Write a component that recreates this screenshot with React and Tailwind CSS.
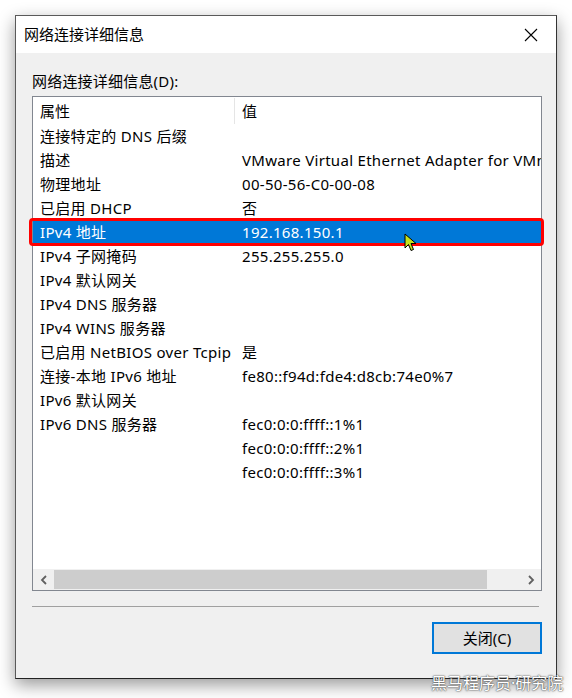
import React from 'react';

const FONT = { fontFamily: '"Noto Sans", "Noto Sans CJK SC", sans-serif' };

const rows = [
  ['连接特定的 DNS 后缀', ''],
  ['描述', 'VMware Virtual Ethernet Adapter for VMnet8'],
  ['物理地址', '00-50-56-C0-00-08'],
  ['已启用 DHCP', '否'],
  ['IPv4 地址', '192.168.150.1'],
  ['IPv4 子网掩码', '255.255.255.0'],
  ['IPv4 默认网关', ''],
  ['IPv4 DNS 服务器', ''],
  ['IPv4 WINS 服务器', ''],
  ['已启用 NetBIOS over Tcpip', '是'],
  ['连接-本地 IPv6 地址', 'fe80::f94d:fde4:d8cb:74e0%7'],
  ['IPv6 默认网关', ''],
  ['IPv6 DNS 服务器', 'fec0:0:0:ffff::1%1'],
  ['', 'fec0:0:0:ffff::2%1'],
  ['', 'fec0:0:0:ffff::3%1'],
];

const Row = ({ name, value, selected }) => (
  <div
    className={`flex h-[24px] items-center whitespace-nowrap text-[15px] tracking-[0.3px] pt-[1px] ${
      selected ? 'bg-[#0078d7] text-white' : 'text-black'
    }`}
  >
    <div className="w-[202px] shrink-0 pl-[7px]">{name}</div>
    <div className="pl-[7px] overflow-hidden">{value}</div>
  </div>
);

export default function App() {
  return (
    <div className="relative w-[572px] h-[698px] bg-white overflow-hidden" style={FONT}>
      <div className="pt-[15px] pl-[15px]">
        {/* dialog window */}
        <div className="w-[542px] h-[664px] flex flex-col border border-[#5a5a5a] border-r-[#333] border-b-[#222] bg-[#f0f0f0] shadow-[0_6px_16px_rgba(0,0,0,0.4)]">
          {/* title bar */}
          <div className="h-[37px] shrink-0 bg-white flex items-center justify-between pl-[8px] pr-[8px]">
            <span className="text-[15px] text-black">网络连接详细信息</span>
            <svg width="14" height="14" viewBox="0 0 14 14" className="mr-[10px]">
              <path d="M1 1 L13 13 M13 1 L1 13" stroke="#000" strokeWidth="1.1" />
            </svg>
          </div>

          {/* body */}
          <div className="flex-1 flex flex-col pl-[16px] pr-[14px]">
            <div className="h-[43px] flex items-end pb-[4px] text-[15px] text-black tracking-[0.2px]">
              网络连接详细信息(D):
            </div>

            {/* list */}
            <div className="relative h-[495px] w-[510px] border border-[#828790] bg-white flex flex-col">
              <div className="flex h-[27px] items-center text-[15px] text-black whitespace-nowrap pt-[1px]">
                <div className="w-[202px] shrink-0 pl-[7px] h-full flex items-center border-r border-[#e5e5e5]">
                  属性
                </div>
                <div className="pl-[7px]">值</div>
              </div>
              <div className="flex-1 overflow-hidden">
                {rows.map(([n, v], i) => (
                  <Row key={i} name={n} value={v} selected={i === 4} />
                ))}
              </div>

              {/* horizontal scrollbar */}
              <div className="h-[21px] shrink-0 flex items-center bg-[#f0f0f0]">
                <div className="w-[21px] h-full flex items-center justify-center">
                  <svg width="8" height="10" viewBox="0 0 8 10">
                    <path d="M6 1 L2 5 L6 9" stroke="#606060" strokeWidth="1.8" fill="none" />
                  </svg>
                </div>
                <div className="flex-1 h-full py-[1px] pr-[33px]">
                  <div className="h-full bg-[#cdcdcd]" />
                </div>
                <div className="w-[21px] h-full flex items-center justify-center">
                  <svg width="8" height="10" viewBox="0 0 8 10">
                    <path d="M2 1 L6 5 L2 9" stroke="#606060" strokeWidth="1.8" fill="none" />
                  </svg>
                </div>
              </div>

              {/* red highlight around selected row */}
              <div className="absolute left-[-4px] right-[-3px] top-[121px] h-[28px] border-[3px] border-[#ff0000] rounded-[4px] pointer-events-none" />
            </div>

            <div className="mt-[15px] h-[1px] w-[507px] bg-[#a0a0a0]" />

            <div className="flex justify-end mt-[15px] pr-0">
              <button className="w-[110px] h-[32px] border-2 border-[#0078d7] bg-[#e1e1e1] text-[15px] text-black">
                关闭(C)
              </button>
            </div>
          </div>
        </div>
      </div>

      {/* mouse cursor */}
      <svg className="absolute left-[404px] top-[233px]" width="14" height="20" viewBox="0 0 14 20">
        <path d="M1 1 L1 15 L4.5 11.5 L7 17.5 L9.5 16.5 L7 10.5 L12 10.5 Z" fill="#c6e21c" stroke="#000" strokeWidth="1" />
      </svg>

      {/* watermark */}
      <div className="absolute left-[431px] top-[671px] text-[16px] text-white [text-shadow:0_0_2px_#444,0_0_1px_#444]">
        黑马程序员·研究院
      </div>
    </div>
  );
}
